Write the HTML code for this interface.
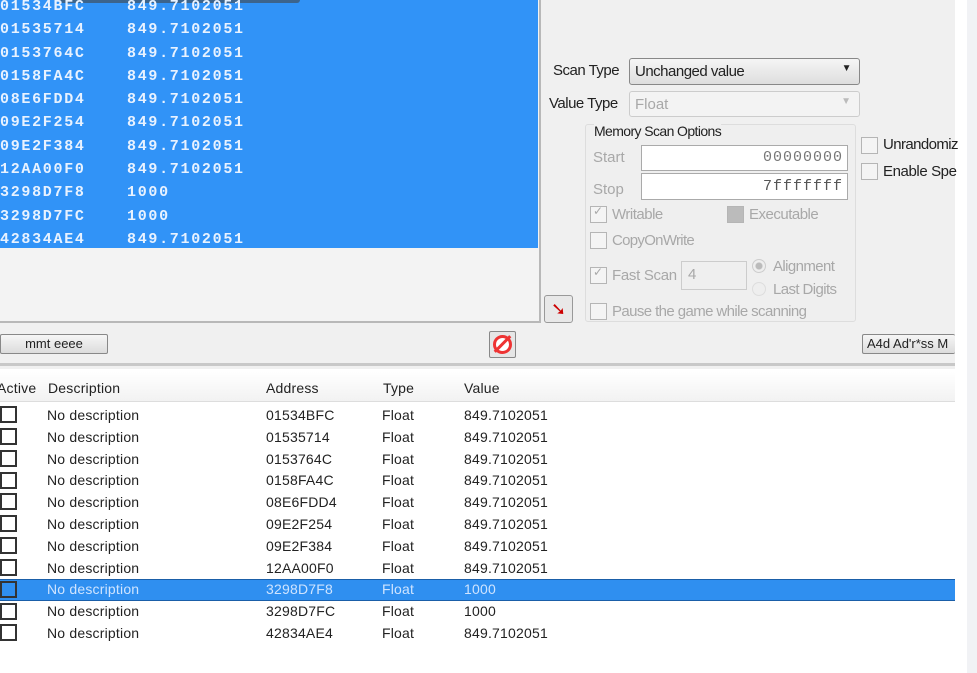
<!DOCTYPE html>
<html><head><meta charset="utf-8"><style>
*{margin:0;padding:0;box-sizing:border-box}
body{width:977px;height:673px;overflow:hidden;background:#f0f0f0;position:relative;font-family:"Liberation Sans",sans-serif;font-size:14px;color:#222}
.a{position:absolute;white-space:nowrap}
.blue{left:0;top:0;width:538px;height:248px;background:#3193f7}
.m{font-family:"Liberation Mono",monospace;font-weight:bold;font-size:15px;color:#e8f2ff;letter-spacing:1.7px}
.lp{left:0;top:0;width:541px;height:323px;border-right:2px solid #b8b8b8;border-bottom:2px solid #b8b8b8;background:#f3f3f3}
.g{color:#a8a8a8}
.cb{position:absolute;width:17px;height:17px;border:1px solid #b5b5b5;background:#f4f4f4}
.inp{position:absolute;background:#fff;border:1px solid #aaa;font-size:15px;color:#777;text-align:right;padding-right:4px;font-family:"Liberation Mono",monospace;letter-spacing:1px}
.lc{position:absolute;width:17px;height:17px;border:2px solid #333;background:#fff;left:0}
.r{font-size:14px;letter-spacing:0.2px;color:#222}
</style></head><body>
<div class="a lp"></div>
<div class="a blue"></div>
<div class="a" style="left:60px;top:0;width:240px;height:3px;background:#444;border-radius:0 0 4px 4px;opacity:.6"></div>
<div class="a m" style="left:0;top:-5px;line-height:23.3px">01534BFC<br>01535714<br>0153764C<br>0158FA4C<br>08E6FDD4<br>09E2F254<br>09E2F384<br>12AA00F0<br>3298D7F8<br>3298D7FC<br>42834AE4</div>
<div class="a m" style="left:127px;top:-5px;line-height:23.3px">849.7102051<br>849.7102051<br>849.7102051<br>849.7102051<br>849.7102051<br>849.7102051<br>849.7102051<br>849.7102051<br>1000<br>1000<br>849.7102051</div>

<div class="a" style="left:955px;top:0;width:22px;height:673px;background:#fff"></div>
<div class="a" style="left:967px;top:0;width:10px;height:673px;background:#f1f2f5"></div>

<div class="a" style="left:553px;top:62px;font-size:15px;letter-spacing:-0.5px">Scan Type</div>
<div class="a" style="left:629px;top:58px;width:231px;height:27px;border:1px solid #888;border-radius:3px;background:linear-gradient(#f5f5f5,#dedede);font-size:15px;padding:4px 5px;letter-spacing:-0.5px">Unchanged value<span style="position:absolute;right:8px;top:4px;font-size:10px">▼</span></div>
<div class="a" style="left:549px;top:95px;font-size:15px;letter-spacing:-0.5px">Value Type</div>
<div class="a g" style="left:629px;top:91px;width:231px;height:26px;border:1px solid #ccc;border-radius:3px;background:#f3f3f3;font-size:15px;padding:4px 5px">Float<span style="position:absolute;right:8px;top:4px;font-size:10px;color:#bbb">▼</span></div>

<div class="a" style="left:585px;top:124px;width:271px;height:198px;border:1px solid #ddd;border-radius:3px;background:#efefef"></div>
<div class="a" style="left:594px;top:123px;font-size:14px;letter-spacing:-0.6px;background:#f0f0f0">Memory Scan Options</div>
<div class="a g" style="left:593px;top:149px;font-size:15px">Start</div>
<div class="inp" style="left:641px;top:145px;width:207px;height:26px;line-height:24px">00000000</div>
<div class="a g" style="left:593px;top:181px;font-size:15px">Stop</div>
<div class="inp" style="left:641px;top:173px;width:207px;height:27px;line-height:25px;color:#555">7fffffff</div>
<div class="cb" style="left:590px;top:206px"></div><div class="a g" style="left:593px;top:204px;font-size:12px">✓</div>
<div class="a g" style="left:612px;top:206px;font-size:15px;letter-spacing:-0.5px">Writable</div>
<div class="cb" style="left:727px;top:206px;background:#bbb"></div>
<div class="a g" style="left:749px;top:206px;font-size:15px;letter-spacing:-0.5px">Executable</div>
<div class="cb" style="left:590px;top:232px"></div>
<div class="a g" style="left:612px;top:232px;font-size:15px;letter-spacing:-0.7px">CopyOnWrite</div>
<div class="cb" style="left:590px;top:267px"></div><div class="a g" style="left:593px;top:265px;font-size:12px">✓</div>
<div class="a g" style="left:612px;top:267px;font-size:15px;letter-spacing:-0.3px">Fast Scan</div>
<div class="a g" style="left:681px;top:261px;width:66px;height:29px;border:1px solid #ccc;font-size:15px;padding:4px 6px">4</div>
<div class="a" style="left:752px;top:259px;width:14px;height:14px;border-radius:50%;border:1px solid #ccc;background:radial-gradient(#bbb 3px,#eee 4px)"></div>
<div class="a g" style="left:773px;top:258px;font-size:15px;letter-spacing:-0.6px">Alignment</div>
<div class="a" style="left:752px;top:282px;width:14px;height:14px;border-radius:50%;border:1px solid #ddd;background:#eee"></div>
<div class="a g" style="left:773px;top:281px;font-size:15px;letter-spacing:-0.6px">Last Digits</div>
<div class="cb" style="left:590px;top:303px"></div>
<div class="a g" style="left:612px;top:303px;font-size:15px;letter-spacing:-0.6px">Pause the game while scanning</div>
<div class="a" style="left:544px;top:295px;width:29px;height:28px;border:1px solid #999;border-radius:3px;background:#e8e8e8;color:#c00;font-size:18px;text-align:center;line-height:26px">➘</div>

<div class="cb" style="left:861px;top:137px"></div>
<div class="a" style="left:883px;top:136px;font-size:15px;letter-spacing:-0.6px">Unrandomiz</div>
<div class="cb" style="left:861px;top:163px"></div>
<div class="a" style="left:883px;top:163px;font-size:15px;letter-spacing:-0.4px">Enable Spe</div>

<div class="a" style="left:0;top:334px;width:108px;height:20px;border:1px solid #888;border-radius:2px;background:linear-gradient(#f6f6f6,#dcdcdc);font-size:13px;text-align:center;line-height:18px">mmt eeee</div>
<div class="a" style="left:489px;top:331px;width:27px;height:27px;border:1px solid #888;border-radius:2px;background:#e6e6e6"></div>
<div class="a" style="left:493px;top:335px;width:19px;height:19px;border-radius:50%;border:3px solid #e33;background:#fff"></div>
<div class="a" style="left:501px;top:333px;width:3px;height:22px;background:#e33;transform:rotate(45deg)"></div>
<div class="a" style="left:862px;top:334px;width:93px;height:20px;border:1px solid #888;border-right:none;border-radius:2px;background:linear-gradient(#f6f6f6,#dcdcdc);font-size:13px;line-height:18px;padding-left:4px;overflow:hidden">A4d Ad'r*ss M</div>

<div class="a" style="left:0;top:363px;width:955px;height:3px;background:#c8c8c8"></div>
<div class="a" style="left:0;top:369px;width:955px;height:304px;background:#fff"></div>
<div class="a" style="left:0;top:372px;width:955px;height:30px;background:linear-gradient(#fff,#f2f2f2);border-bottom:1px solid #ddd"></div>
<div class="a r" style="left:-3px;top:380px">Active</div>
<div class="a r" style="left:48px;top:380px">Description</div>
<div class="a r" style="left:266px;top:380px">Address</div>
<div class="a r" style="left:383px;top:380px">Type</div>
<div class="a r" style="left:464px;top:380px">Value</div>

<div class="a" style="left:0;top:579px;width:955px;height:22px;background:#2f8ff0;border-top:1px solid #1a5ea8;border-bottom:1px solid #1a5ea8"></div>

<div class="lc" style="top:406px"></div><div class="lc" style="top:428px"></div><div class="lc" style="top:450px"></div><div class="lc" style="top:472px"></div><div class="lc" style="top:493px"></div><div class="lc" style="top:515px"></div><div class="lc" style="top:537px"></div><div class="lc" style="top:559px"></div><div class="lc" style="top:581px;background:#2f8ff0"></div><div class="lc" style="top:603px"></div><div class="lc" style="top:624px"></div>

<div class="a r" style="left:47px;top:405px;line-height:21.8px">No description<br>No description<br>No description<br>No description<br>No description<br>No description<br>No description<br>No description<br><span style="color:#cfe4ff">No description</span><br>No description<br>No description</div>
<div class="a r" style="left:266px;top:405px;line-height:21.8px">01534BFC<br>01535714<br>0153764C<br>0158FA4C<br>08E6FDD4<br>09E2F254<br>09E2F384<br>12AA00F0<br><span style="color:#cfe4ff">3298D7F8</span><br>3298D7FC<br>42834AE4</div>
<div class="a r" style="left:382px;top:405px;line-height:21.8px">Float<br>Float<br>Float<br>Float<br>Float<br>Float<br>Float<br>Float<br><span style="color:#cfe4ff">Float</span><br>Float<br>Float</div>
<div class="a r" style="left:464px;top:405px;line-height:21.8px">849.7102051<br>849.7102051<br>849.7102051<br>849.7102051<br>849.7102051<br>849.7102051<br>849.7102051<br>849.7102051<br><span style="color:#cfe4ff">1000</span><br>1000<br>849.7102051</div>
</body></html>
